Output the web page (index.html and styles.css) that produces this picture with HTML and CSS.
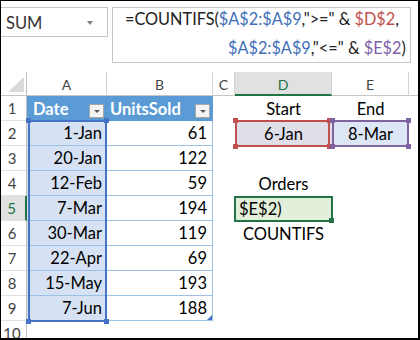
FILE: index.html
```html
<!DOCTYPE html>
<html lang="en">
<head>
    <meta charset="UTF-8">
    <title>COUNTIFS between two dates</title>
    <link rel="stylesheet" href="styles.css">
</head>
<body>
    <div class="window">
        <div class="bar">
            <div class="name-box">
                <span>SUM</span>
                <span class="name-arrow"></span>
            </div>
            <div class="formula-box">
                <div class="f-line">=COUNTIFS(<span class="ref-blue">$A$2:$A$9</span>,"&gt;=" &amp; <span class="ref-red">$D$2</span>,</div>
                <div class="f-line indent"><span class="ref-blue">$A$2:$A$9</span>,"&lt;=" &amp; <span class="ref-purple">$E$2</span>)</div>
            </div>
        </div>

        <div class="sheet">
            <div class="cells">
                <!-- column headers -->
                <div class="corner"><span class="corner-tri"></span></div>
                <div class="ch">A</div>
                <div class="ch">B</div>
                <div class="ch">C</div>
                <div class="ch on">D</div>
                <div class="ch">E</div>
                <div class="ch last"></div>

                <!-- row 1 -->
                <div class="rh">1</div>
                <div class="c th th-a"><span>Date</span><span class="drop"></span></div>
                <div class="c th th-b"><span>UnitsSold</span><span class="drop"></span></div>
                <div class="c"></div>
                <div class="c ctr">Start</div>
                <div class="c ctr">End</div>
                <div class="c"></div>

                <!-- row 2 -->
                <div class="rh">2</div>
                <div class="c r ta">1-Jan</div>
                <div class="c r tb">61</div>
                <div class="c"></div>
                <div class="c ctr fill-d">6-Jan</div>
                <div class="c ctr fill-e">8-Mar</div>
                <div class="c"></div>

                <!-- row 3 -->
                <div class="rh">3</div>
                <div class="c r ta">20-Jan</div>
                <div class="c r tb">122</div>
                <div class="c"></div>
                <div class="c"></div>
                <div class="c"></div>
                <div class="c"></div>

                <!-- row 4 -->
                <div class="rh">4</div>
                <div class="c r ta">12-Feb</div>
                <div class="c r tb">59</div>
                <div class="c"></div>
                <div class="c ctr">Orders</div>
                <div class="c"></div>
                <div class="c"></div>

                <!-- row 5 -->
                <div class="rh on">5</div>
                <div class="c r ta">7-Mar</div>
                <div class="c r tb">194</div>
                <div class="c"></div>
                <div class="c fill-active">$E$2)</div>
                <div class="c"></div>
                <div class="c"></div>

                <!-- row 6 -->
                <div class="rh">6</div>
                <div class="c r ta">30-Mar</div>
                <div class="c r tb">119</div>
                <div class="c"></div>
                <div class="c ctr">COUNTIFS</div>
                <div class="c"></div>
                <div class="c"></div>

                <!-- row 7 -->
                <div class="rh">7</div>
                <div class="c r ta">22-Apr</div>
                <div class="c r tb">69</div>
                <div class="c"></div>
                <div class="c"></div>
                <div class="c"></div>
                <div class="c"></div>

                <!-- row 8 -->
                <div class="rh">8</div>
                <div class="c r ta">15-May</div>
                <div class="c r tb">193</div>
                <div class="c"></div>
                <div class="c"></div>
                <div class="c"></div>
                <div class="c"></div>

                <!-- row 9 -->
                <div class="rh">9</div>
                <div class="c r ta">7-Jun</div>
                <div class="c r tb">188</div>
                <div class="c"></div>
                <div class="c"></div>
                <div class="c"></div>
                <div class="c"></div>

                <!-- row 10 -->
                <div class="rh">10</div>
                <div class="c"></div>
                <div class="c"></div>
                <div class="c"></div>
                <div class="c"></div>
                <div class="c"></div>
                <div class="c"></div>
            </div>

            <!-- selection and reference boxes drawn over the cells -->
            <div class="marks">
                <div class="box sel">
                    <i class="h tl"></i><i class="h tr"></i><i class="h bl"></i><i class="h br"></i>
                </div>
                <div class="box ref-d">
                    <i class="h tl"></i><i class="h tr"></i><i class="h bl"></i><i class="h br"></i>
                </div>
                <div class="box ref-e">
                    <i class="h tl"></i><i class="h tr"></i><i class="h bl"></i><i class="h br"></i>
                </div>
                <div class="box active">
                    <i class="h br"></i>
                </div>
                <div class="resize"></div>
            </div>
        </div>
    </div>
</body>
</html>
```

FILE: styles.css
```css
:root {
    --table: #5b9bd5;
    --table-line: #9bc2e6;
    --select: #4472c4;
    --green: #217346;
    --red: #c0504d;
    --purple: #8064a2;
    --head-line: #d4d4d4;
}

* {
    margin: 0;
    padding: 0;
    box-sizing: border-box;
}

body {
    background: #fff;
    font-family: "Lato", "Noto Sans", sans-serif;
    color: #000;
}

.window {
    width: 420px;
    height: 340px;
    border: 1px solid #000;
    border-right-width: 2px;
    border-bottom-width: 2px;
    display: flex;
    flex-direction: column;
    overflow: hidden;
}

/* formula bar */
.bar {
    height: 71px;
    flex-shrink: 0;
    display: flex;
    align-items: flex-start;
    gap: 4px;
    padding-top: 6px;
}

.name-box {
    width: 107px;
    height: 30px;
    border: 1px solid #c6c6c6;
    border-left: none;
    display: flex;
    align-items: center;
    padding: 1px 0 0 5px;
    font-size: 16.5px;
    color: #333;
}

.name-arrow {
    margin-left: auto;
    margin-right: 14px;
    width: 0;
    height: 0;
    border-left: 3px solid transparent;
    border-right: 3px solid transparent;
    border-top: 4px solid #7f7f7f;
}

.formula-box {
    width: 299px;
    height: 56px;
    border: 1px solid #c6c6c6;
    padding-left: 12px;
    font-size: 16.3px;
    color: #222;
    white-space: nowrap;
}

.f-line {
    line-height: 21px;
}

.f-line.indent {
    margin-top: 8px;
    padding-left: 103px;
}

.ref-blue { color: #3f6fba; }
.ref-red { color: var(--red); }
.ref-purple { color: #7e5fa8; }

/* sheet */
.sheet {
    flex: 1;
    display: grid;
    overflow: hidden;
}

.cells,
.marks {
    grid-area: 1 / 1;
    display: grid;
    grid-template-columns: 26px 80px 106px 22px 97px 77px 1fr;
    grid-template-rows: 24px repeat(10, 25px);
}

.marks {
    pointer-events: none;
}

.corner {
    display: flex;
    justify-content: flex-end;
    align-items: flex-end;
    padding: 0 2px 3px 0;
    border-right: 1px solid #bfbfbf;
    border-bottom: 1px solid #c6c6c6;
}

.corner-tri {
    width: 0;
    height: 0;
    border-left: 16px solid transparent;
    border-bottom: 15px solid #dadada;
}

.ch {
    text-align: center;
    font-size: 14px;
    line-height: 23px;
    padding-top: 1px;
    color: #444;
    border-right: 1px solid var(--head-line);
    border-bottom: 1px solid #c6c6c6;
}

.ch.last {
    border-right: none;
}

.ch.on {
    background: #e1e1e1;
    color: var(--green);
    border-bottom: 2px solid var(--green);
}

.rh {
    display: flex;
    align-items: center;
    justify-content: center;
    padding-right: 3px;
    font-size: 15px;
    color: #444;
    border-right: 1px solid #bfbfbf;
    border-bottom: 1px solid #e1e1e1;
}

.rh.on {
    background: #e1e1e1;
    color: var(--green);
    border-right: 2px solid var(--green);
}

.c {
    display: flex;
    align-items: center;
    padding: 0 5px;
    font-size: 16.5px;
    white-space: nowrap;
}

.c.r { justify-content: flex-end; }
.c.ctr { justify-content: center; }

/* table */
.th {
    background: var(--table);
    color: #fff;
    font-weight: bold;
    padding-right: 3px;
}

.th-a { padding-left: 6px; }
.th-b { padding-left: 3px; }

.drop {
    margin-left: auto;
    align-self: flex-end;
    margin-bottom: 3px;
    width: 15px;
    height: 14px;
    background: #f4f4f4;
    border: 1px solid #a6a6a6;
    display: flex;
    justify-content: center;
    align-items: center;
}

.drop::after {
    content: "";
    width: 0;
    height: 0;
    border-left: 3px solid transparent;
    border-right: 3px solid transparent;
    border-top: 3px solid #595959;
}

.ta {
    background: #d6e2f3;
    border-bottom: 1px solid var(--table-line);
}

.tb {
    border-bottom: 1px solid var(--table-line);
    border-right: 1px solid var(--table-line);
}

.fill-d { background: #e0dee8; }
.fill-e { background: #dce6f5; }

.fill-active {
    background: #e2efda;
    padding-left: 4px;
}

/* overlay boxes */
.box {
    position: relative;
    border: 2px solid var(--c);
}

.h {
    position: absolute;
    width: 5px;
    height: 5px;
    background: var(--c);
}

.tl { top: -4px; left: -4px; }
.tr { top: -4px; right: -4px; }
.bl { bottom: -4px; left: -4px; }
.br { bottom: -4px; right: -4px; }

.sel {
    --c: var(--select);
    grid-row: 3 / 11;
    grid-column: 2;
    margin: -1px 0 -1px 1px;
}

.ref-d {
    --c: var(--red);
    grid-row: 3;
    grid-column: 5;
    margin: -1px 2px -1px 0;
}

.ref-e {
    --c: var(--purple);
    grid-row: 3;
    grid-column: 6;
    margin: -1px 0 -1px 0;
}

.active {
    --c: var(--green);
    grid-row: 6;
    grid-column: 5;
    margin: 0 -1px -1px -1px;
}

.active .br {
    bottom: -3px;
    right: -3px;
}

.resize {
    grid-row: 10;
    grid-column: 3;
    justify-self: end;
    align-self: end;
    margin: 0 1px 1px 0;
    width: 0;
    height: 0;
    border-left: 5px solid transparent;
    border-bottom: 5px solid var(--select);
}
```
